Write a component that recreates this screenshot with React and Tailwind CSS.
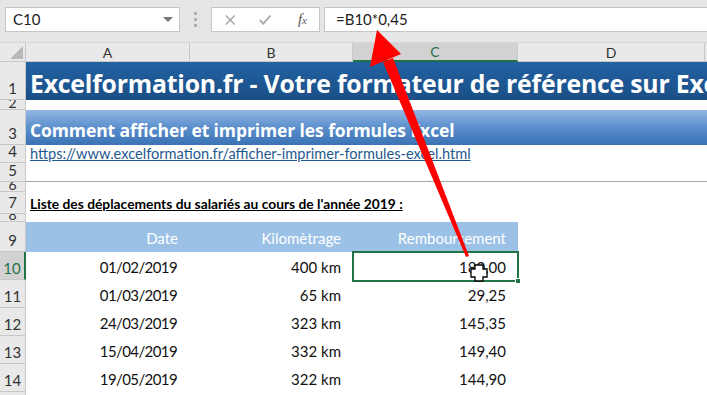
import React from 'react';

const font = { fontFamily: 'Lato, "Open Sans", sans-serif' };
const wide = { fontFamily: '"Open Sans", Lato, sans-serif' };

const rows = [
  { n: 10, date: '01/02/2019', km: '400 km', r: '180,00' },
  { n: 11, date: '01/03/2019', km: '65 km', r: '29,25' },
  { n: 12, date: '24/03/2019', km: '323 km', r: '145,35' },
  { n: 13, date: '15/04/2019', km: '332 km', r: '149,40' },
  { n: 14, date: '19/05/2019', km: '322 km', r: '144,90' },
];

function RowHead({ n, h, active, small }) {
  return (
    <div
      className={`w-[26px] shrink-0 flex items-end justify-center border-b border-r border-[#c8c8c8] ${
        active ? 'bg-[#d2d2d2] text-[#217346] border-r-2 border-r-[#217346]' : 'bg-[#e9e9e9] text-[#333]'
      } ${small ? 'text-[14px] leading-[12px] overflow-hidden' : 'text-[15px] leading-[22px]'}`}
      style={{ height: h }}
    >
      {n}
    </div>
  );
}

function FormulaBar() {
  return (
    <div className="h-[42px] bg-[#e6e6e6] flex items-start pt-[7px] pl-[5px]">
      <div className="w-[175px] h-[25px] bg-white border border-[#c6c6c6] flex items-center justify-between pl-[7px] pr-[6px] text-[15px] text-[#222]">
        <span>C10</span>
        <span className="w-0 h-0 border-l-[5px] border-r-[5px] border-t-[5px] border-l-transparent border-r-transparent border-t-[#777]" />
      </div>
      <div className="w-[31px] h-[25px] flex flex-col items-center justify-center gap-[3px]">
        <span className="w-[3px] h-[3px] bg-[#b0b0b0]" />
        <span className="w-[3px] h-[3px] bg-[#b0b0b0]" />
        <span className="w-[3px] h-[3px] bg-[#b0b0b0]" />
      </div>
      <div className="w-[109px] h-[25px] bg-white border border-[#c6c6c6] flex items-center px-[12px] gap-[16px]">
        <svg width="14" height="14" viewBox="0 0 14 14">
          <path d="M2 2 L12 12 M12 2 L2 12" stroke="#a8a8a8" strokeWidth="1.6" />
        </svg>
        <svg width="16" height="14" viewBox="0 0 16 14" className="ml-[5px]">
          <path d="M2 7 L6 11 L14 2" stroke="#a8a8a8" strokeWidth="2" fill="none" />
        </svg>
        <span className="ml-[10px] italic text-[#555] text-[15px]" style={{ fontFamily: '"Liberation Serif", serif' }}>
          f<span className="text-[11px]">x</span>
        </span>
      </div>
      <div className="flex-1 h-[25px] ml-[4px] bg-white border border-[#c6c6c6] border-r-0 flex items-center pl-[11px] text-[15px] text-[#222]">
        =B10*0,45
      </div>
    </div>
  );
}

function ColHeads() {
  const cols = [
    { l: 'A', w: 164 },
    { l: 'B', w: 163 },
    { l: 'C', w: 165, active: true },
    { l: 'D', w: 187 },
  ];
  return (
    <div className="flex h-[20px] bg-[#e9e9e9] border-t border-[#d6d6d6]">
      <div className="w-[26px] shrink-0 border-r border-b border-[#c8c8c8] relative">
        <svg className="absolute right-[2px] bottom-[2px]" width="13" height="13" viewBox="0 0 13 13">
          <path d="M13 0 L13 13 L0 13 Z" fill="#b8b8b8" />
        </svg>
      </div>
      {cols.map((c) => (
        <div
          key={c.l}
          className={`shrink-0 flex items-center justify-center text-[14px] border-r border-[#c8c8c8] ${
            c.active ? 'bg-[#d2d2d2] text-[#217346] border-b-2 border-b-[#217346]' : 'text-[#333] border-b border-b-[#c8c8c8]'
          }`}
          style={{ width: c.w }}
        >
          {c.l}
        </div>
      ))}
      <div className="flex-1 border-b border-[#c8c8c8]" />
    </div>
  );
}

export default function App() {
  return (
    <div className="w-[707px] h-[395px] relative overflow-hidden bg-white" style={font}>
      <FormulaBar />
      <ColHeads />

      {/* row 1 */}
      <div className="flex">
        <RowHead n={1} h={38} />
        <div className="flex-1 bg-gradient-to-b from-[#2262a3] to-[#1b4f86] flex items-end pl-[4px] pb-[1px] overflow-hidden whitespace-nowrap">
          <span className="text-white font-bold text-[24.8px] leading-[32px] tracking-[-0.2px]" style={wide}>
            Excelformation.fr - Votre formateur de référence sur Excel
          </span>
        </div>
      </div>
      {/* row 2 */}
      <div className="flex">
        <RowHead n={2} h={10} small />
        <div className="flex-1" />
      </div>
      {/* row 3 */}
      <div className="flex">
        <RowHead n={3} h={35} />
        <div className="flex-1 bg-gradient-to-b from-[#93b7e4] via-[#5b8fcc] to-[#3a72b4] flex items-end pl-[4px] pb-[3px] whitespace-nowrap">
          <span className="text-white font-bold text-[17.5px] leading-[24px] tracking-[-0.1px]" style={wide}>
            Comment afficher et imprimer les formules Excel
          </span>
        </div>
      </div>
      {/* row 4 */}
      <div className="flex">
        <RowHead n={4} h={18} />
        <div className="flex-1 flex items-end pl-[4px] whitespace-nowrap">
          <span className="text-[#1f5a8e] underline text-[14.6px] leading-[18px]">
            https://www.excelformation.fr/afficher-imprimer-formules-excel.html
          </span>
        </div>
      </div>
      {/* row 5 */}
      <div className="flex">
        <RowHead n={5} h={19} />
        <div className="flex-1 border-b border-[#a6a6a6]" />
      </div>
      {/* row 6 */}
      <div className="flex">
        <RowHead n={6} h={10} small />
        <div className="flex-1" />
      </div>
      {/* row 7 */}
      <div className="flex">
        <RowHead n={7} h={22} />
        <div className="flex-1 flex items-end pl-[4px] whitespace-nowrap">
          <span className="text-black font-bold underline text-[13.8px] leading-[20px]">
            Liste des déplacements du salariés au cours de l'année 2019 :
          </span>
        </div>
      </div>
      {/* row 8 */}
      <div className="flex">
        <RowHead n={8} h={8} small />
        <div className="flex-1" />
      </div>
      {/* row 9 */}
      <div className="flex">
        <RowHead n={9} h={30} />
        <div className="w-[492px] bg-[#9bc2e6] grid grid-cols-[164px_163px_165px] items-end pb-[3px] text-white text-[15px] leading-[22px]">
          <div className="text-right pr-[12px]">Date</div>
          <div className="text-right pr-[12px]">Kilomètrage</div>
          <div className="text-right pr-[12px]">Remboursement</div>
        </div>
      </div>
      {rows.map((r) => (
        <div key={r.n} className="flex">
          <RowHead n={r.n} h={28} active={r.n === 10} />
          <div className="grid grid-cols-[164px_163px_165px] items-end pb-[2px] text-[15px] leading-[22px] text-[#111]">
            <div className="text-right pr-[13px] tracking-[-0.6px]">{r.date}</div>
            <div className="text-right pr-[12px]">{r.km}</div>
            <div className="text-right pr-[12px]">{r.r}</div>
          </div>
        </div>
      ))}
      <div className="flex">
        <RowHead n={15} h={20} />
      </div>

      {/* selected cell C10 */}
      <div className="absolute left-[352px] top-[251px] w-[167px] h-[31px] border-2 border-[#217346]">
        <div className="absolute -right-[4px] -bottom-[4px] w-[6px] h-[6px] bg-[#217346] border border-white" />
      </div>

      {/* red arrow + cursor overlay */}
      <svg className="absolute left-0 top-0 pointer-events-none" width="707" height="395">
        <polygon points="466,257 469,256 393,58 383,62" fill="#ff0000" />
        <polygon points="377,30 401,54 370,67" fill="#ff0000" />
        <path
          d="M475 265 h8 v4 h4 v8 h-4 v4 h-8 v-4 h-4 v-8 h4 z"
          fill="#fff"
          stroke="#000"
          strokeWidth="1.3"
        />
      </svg>
    </div>
  );
}
